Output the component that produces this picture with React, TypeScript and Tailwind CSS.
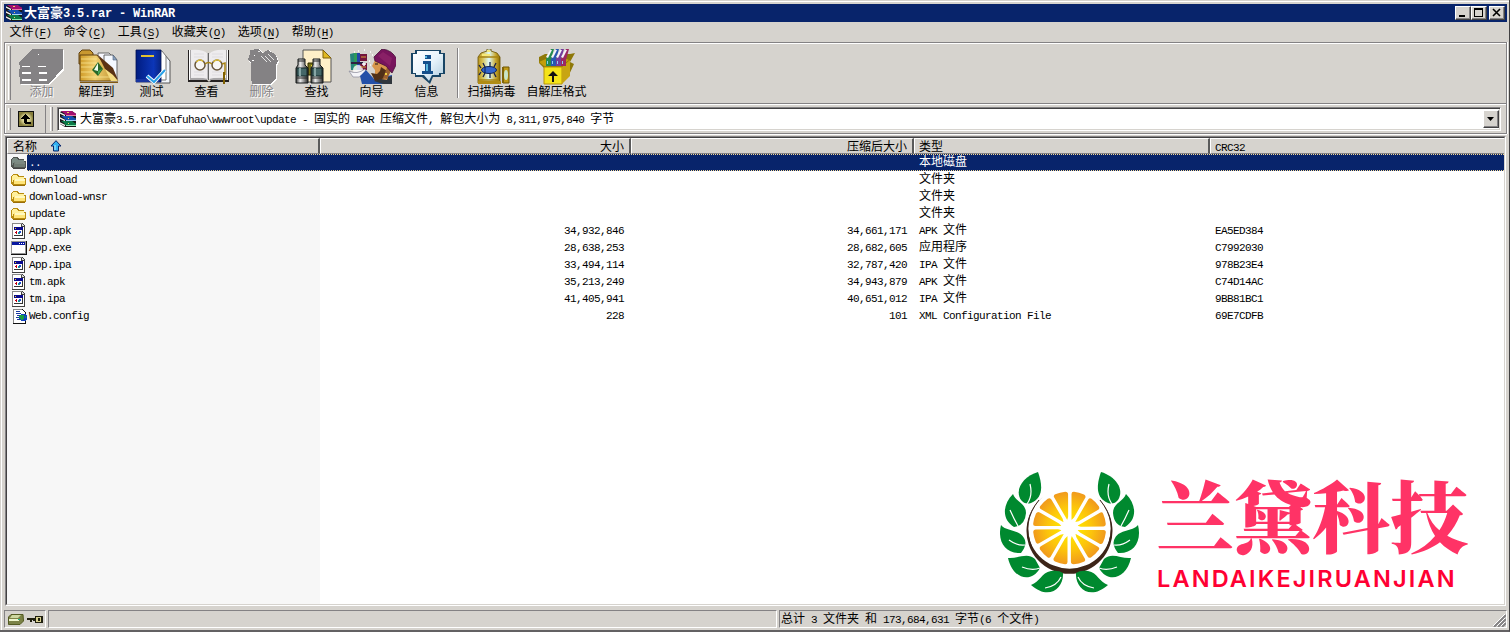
import React from "react";

/* Splits mixed text so Latin runs sit on a half-width grid next to full-width glyphs. */
function T({ children, bold = false }: { children: string; bold?: boolean }) {
  const runs = children.match(/[\u2e80-\uffff]+|[^\u2e80-\uffff]+/g) ?? [];
  return (
    <span className="whitespace-pre">
      {runs.map((r, i) =>
        /[\u2e80-\uffff]/.test(r) ? (
          <span key={i} className={bold ? "text-[13px] font-bold" : "text-[12px]"}>{r}</span>
        ) : (
          <span
            key={i}
            className={
              bold
                ? "font-['Liberation_Mono',monospace] text-[12px] font-bold tracking-[-0.2px]"
                : "font-['Liberation_Mono',monospace] text-[11px] tracking-[-0.6px]"
            }
          >
            {r}
          </span>
        )
      )}
    </span>
  );
}

function Books() {
  const books: [number, string, string][] = [
    [10, "#0a7a48", "#8ce8b4"],
    [5, "#1450b0", "#a0d0f8"],
    [0, "#a01070", "#e87aa8"],
  ];
  return (
    <svg width="16" height="16" viewBox="0 0 16 16" className="shrink-0">
      <path d="M0 1L2 0H12L16 3V16H5L0 13Z" fill="#181818" />
      {books.map(([y, cover, edge]) => (
        <g key={y} transform={`translate(0 ${y})`}>
          <path d="M1 0H12L16 3H5Z" fill={cover} />
          <path d="M5 2.500H16V4H5Z" fill={cover} />
          <path d="M6 4H16V5H6Z" fill={edge} />
          <path d="M0 1.200L5 3.800V5.200L0 2.800Z" fill="#f4f4f4" />
        </g>
      ))}
      <path d="M7 1H9V2H7ZM8 7H9V8H8ZM8 12H9V13H8Z" fill="#f0d060" />
    </svg>
  );
}

const icons: Record<string, React.ReactNode> = {
  add: (
    <g shapeRendering="crispEdges">
      <path d="M20 63L34 50H64V70L50 85H21V79L20 77V70Z" fill="#fff" />
      <path d="M19 62L33 49H63V68L49 84H20V78L19 76V70L20 68Z" fill="#848284" />
      <path d="M22 66H30V67H22ZM38 66H46V67H38ZM22 72H31V74H22ZM39 72H47V74H39ZM22 79H31V81H22ZM39 79H47V81H39Z" fill="#fff" />
      <path d="M38 54H39V55H38Z" fill="#fff" />
    </g>
  ),
  extract: (
    <g>
      <path d="M78 53L81 50H89L92 53V64H78Z" fill="#c89830" stroke="#604010" />
      <path d="M97 53H108L113 58V74H97Z" fill="#f8f8ff" stroke="#666" />
      <path d="M103 55H112L116 60V79H103Z" fill="#f4f8ff" stroke="#666" />
      <path d="M112 55V60H116Z" fill="#8aa4c0" stroke="#506078" strokeWidth=".6" />
      <path d="M79 55H96L117 81H79Z" fill="url(#gold)" stroke="#604010" />
      <path d="M80 59H96M80 63H98M80 67H94M80 72H92M80 77H110" stroke="#fff0a0" strokeWidth="1" opacity=".65" />
      <path d="M97 55L112 68L117 80L104 69Z" fill="#5a3214" />
      <path d="M104 69L112 75L117 81H110Z" fill="#f4dc80" />
      <path d="M97 62L91 70L97 76L102 69Z" fill="#286828" />
      <path d="M97 63L93 70L97 71Z" fill="#effff0" />
      <path d="M97 71L101 69L97 75Z" fill="#48a858" />
      <path d="M79 82H117V83H79Z" fill="#805810" />
    </g>
  ),
  test: (
    <g>
      <path d="M152 55H164L169 61V83H151Z" fill="#f2f6fc" stroke="#555" />
      <path d="M149 51H161L165 56V80H149Z" fill="#fff" stroke="#777" />
      <path d="M135 50H160V82H135Z" fill="url(#blue)" stroke="#001050" strokeWidth=".8" />
      <path d="M140 55H153V57H140Z" fill="#e0c030" />
      <path d="M135 79H158V82H135Z" fill="#1834a0" />
      <path d="M146 76L153 82L164 70" fill="none" stroke="#fff" strokeWidth="4" />
      <path d="M146 76L153 82L164 70" fill="none" stroke="#28a0e8" strokeWidth="2" />
    </g>
  ),
  view: (
    <g>
      <path d="M187 50H188V80H206L208 82L210 80H227V50H228V82H187Z" fill="#242020" />
      <path d="M188 50H189V80H188ZM226 50H227V80H226Z" fill="#fff" />
      <path d="M189 50H190V78H206V80H189ZM225 50H226V80H209V78H225Z" fill="#a8a6a8" />
      <path d="M190 50Q202 49 207 54V79Q200 77 190 78ZM208 54Q213 49 225 50V78Q214 77 208 79Z" fill="#eeecee" />
      <path d="M206 53H207V79H206Z" fill="#c0bec0" />
      <path d="M207.500 53V80" stroke="#666" />
      <path d="M193 54H203M193 57H203M193 72H203M193 75H203M211 57H222M211 54H222M211 72H221M211 75H221" stroke="#dedce0" />
      <circle cx="199" cy="65" r="5" fill="#f8f6f4" stroke="#68563c" strokeWidth="1.500" />
      <circle cx="216" cy="65" r="5" fill="#f8f6f4" stroke="#68563c" strokeWidth="1.500" />
      <path d="M204 64Q207.500 61 211 64M221 64L224 63V75" fill="none" stroke="#a88414" strokeWidth="1.500" />
      <path d="M195.500 62Q199 58 202 61.500M212.500 62Q216 58 219.500 61.500" fill="none" stroke="#e8c838" strokeWidth="1.300" />
      <path d="M222 72H224V84H222Z" fill="#806000" />
    </g>
  ),
  del: (
    <g shapeRendering="crispEdges">
      <path d="M248 61L250 55V50L258 49L263 53L268 50L276 56L278 62L276 66V79L271 85H252L251 78L250 64Z" fill="#fff" />
      <path d="M247 60L249 54V50L257 49L262 53L267 50L275 55L277 61L275 65V78L270 84H251L250 77V63Z" fill="#848284" />
      <path d="M257 52L259 51M264 56L270 62M267 54L273 60M260 56L266 62" stroke="#fff" fill="none" strokeWidth=".8" />
      <path d="M253 55H254V56H253ZM251 60H253V61H251Z" fill="#fff" />
    </g>
  ),
  find: (
    <g>
      <path d="M302 50H322L330 58V82H302Z" fill="#fff0c8" stroke="#555" />
      <path d="M322 50V58H330Z" fill="#e0b820" stroke="#806008" />
      <path d="M307 63H316V75H307Z" fill="#777018" stroke="#302c00" />
      <path d="M310 65H314V71H310Z" fill="#e8d838" />
      {[294, 309].map((x) => (
        <g key={x} fill="none">
          <path d={`M${x + 3} 59H${x + 10}V65L${x + 13} 68V83H${x + 1}V68L${x + 3} 65Z`} fill="url(#metal)" stroke="#151818" />
          <path d={`M${x + 2} 68H${x + 12}V76H${x + 2}Z`} fill="#456768" stroke="#122626" />
          <path d={`M${x + 5} 68V76`} stroke="#88a6a5" strokeWidth="2" />
          <path d={`M${x + 3} 61H${x + 10}M${x + 2} 78H${x + 12}`} stroke="#222" />
        </g>
      ))}
    </g>
  ),
  wizard: (
    <g>
      <path d="M349 54L353 53V70H350Z" fill="#24857b" />
      <path d="M353 53H356V70H353Z" fill="#2f9a58" />
      <path d="M356 53H359V70H356Z" fill="#2344a8" />
      <path d="M359 54H366V61H359ZM359 63H366V70H359Z" fill="#74143c" />
      <path d="M350 62H364V64H350Z" fill="#2c2040" />
      <circle cx="357" cy="70" r="5" fill="#fff" opacity=".8" />
      <path d="M360 57H365M360 67H365" stroke="#d8a038" />
      <path d="M348 71Q356 75 364 69L365 73L358 77H352Z" fill="#f4f4f8" stroke="#88889a" strokeWidth=".7" />
      <path d="M359 76L365 70L373 79L391 75V84H361Z" fill="#2450a8" />
      <path d="M373 81L382 84H391V76Z" fill="#30363c" />
      <path d="M374 60L371 66L374 70V78L386 80L389 70L385 60Z" fill="#d8964c" />
      <path d="M380 67L386 71L384 78L374 81L370 73L376 74L379 71Z" fill="#503018" />
      <path d="M387 65L390 71L386 79L382 78Z" fill="#9a6030" />
      <path d="M373 57L381 49Q392 50 396 60V63L391 73L385 66L374 61Z" fill="#78145c" stroke="#451038" strokeWidth=".8" />
      <path d="M377 56L382 52L391 58L389 66Z" fill="#94286c" opacity=".6" />
      <path d="M374 64H377" stroke="#1b1410" />
      <path d="M384 73H386V75H384Z" fill="#f0cf3b" />
      <path d="M357 51H358M363 50H364M369 52H370M371 55H372M353 52H354M368 61H369M369 65H370M363 62V66M361 64H365" stroke="#fff" strokeWidth="1.500" />
    </g>
  ),
  info: (
    <g>
      <path d="M414 50H440V53H444V74H440V77H432L429 84L421 77H414V74H410V53H414Z" fill="#184565" />
      <path d="M416 51H438V54H442V73H438V75H431L428 81L423 75H415V73H412V54H416Z" fill="url(#bubble)" />
      <path d="M424 55H430V59H424ZM422 61H430V71H432V74H421V71H424V64H422Z" fill="#134f8b" />
      <path d="M424 56H426V58H424ZM425 64H427V71H425Z" fill="#58b6dc" />
    </g>
  ),
  scan: (
    <g>
      <path d="M486 49H490V51L496 53L499 57V83H477V57L480 53L486 51Z" fill="url(#bottle)" stroke="#6a5200" strokeWidth=".8" />
      <path d="M478 57H498M478 80H498" stroke="#a88410" strokeWidth="1.500" />
      <path d="M486 50H489V52H486ZM481 54H489V56H481Z" fill="#f6e979" />
      <path d="M477 81H500V84H477Z" fill="#b08c14" />
      <path d="M480 68L478 65M480 72L478 75M484 67L482 63M484 73L482 77M489 67V62M489 73V78M493 67L495 63M493 73L495 77" stroke="#15204d" strokeWidth="1.300" fill="none" />
      <ellipse cx="488" cy="70" rx="7.500" ry="3.500" fill="#3264cc" stroke="#102354" />
      <path d="M484 67V73" stroke="#0b2251" />
      <path d="M502 67H508V83H502Z" fill="#c09a18" stroke="#705600" />
      <path d="M501 67H503V83H501Z" fill="#806408" />
      <ellipse cx="505" cy="75" rx="2" ry="5" fill="#c8e4c8" />
    </g>
  ),
  sfx: (
    <g>
      <path d="M539 57L545 54L570 54L575 53L570 62L574 64L568 77L560 84H544V68L539 63Z" fill="#8e7808" />
      <path d="M544 67H562V84H544Z" fill="#f4e31a" stroke="#b6930a" />
      <path d="M562 67L570 60V76L562 84Z" fill="#c8a512" />
      <path d="M539 62L544 66H561L569 60L564 58H548Z" fill="#c39e0a" />
      {[
        [546, "#248b50"],
        [551, "#2858b0"],
        [556, "#753c9c"],
        [561, "#9c2862"],
      ].map(([x, c]) => (
        <g key={x}>
          <path d={`M${x} 59L${+x + 5} 49H${+x + 8}L${+x + 5} 60V66H${x}Z`} fill={c as string} />
          <path d={`M${+x} 57L${+x + 4} 50H${+x + 6}L${+x + 2} 58Z`} fill="#f5f4fb" />
          <path d={`M${+x + 1} 61H${+x + 2}V64H${+x + 1}Z`} fill="#8ad1ee" />
        </g>
      ))}
      <path d="M553 71L548 76H552V82H554V76H558Z" fill="#111" />
    </g>
  ),
};

const tools = [
  { id: "add", x: 18, label: "添加", off: true, w: "w-[55px]" },
  { id: "extract", x: 72, label: "解压到", w: "w-[55px]" },
  { id: "test", x: 127, label: "测试", w: "w-[55px]" },
  { id: "view", x: 182, label: "查看", w: "w-[55px]" },
  { id: "del", x: 237, label: "删除", off: true, w: "w-[55px]" },
  { id: "find", x: 292, label: "查找", w: "w-[55px]" },
  { id: "wizard", x: 347, label: "向导", w: "w-[55px]" },
  { id: "info", x: 402, label: "信息", w: "w-[55px]" },
  { id: "scan", x: 467, label: "扫描病毒", w: "w-[59px]" },
  { id: "sfx", x: 533, label: "自解压格式", w: "w-[71px]" },
];

function Tool({ t }: { t: (typeof tools)[number] }) {
  return (
    <div className={`flex shrink-0 flex-col items-center pt-[6px] ${t.w}`}>
      <svg width="48" height="36" viewBox={`${t.x} 49 48 36`} className="shrink-0">
        {icons[t.id]}
      </svg>
      <div className={`h-[14px] leading-[11px] ${t.off ? "text-[#848284] [text-shadow:1px_1px_#fff]" : ""}`}>
        <T>{t.label}</T>
      </div>
    </div>
  );
}

function Defs() {
  return (
    <svg width="0" height="0" className="absolute">
      <defs>
        <linearGradient id="gold"><stop stopColor="#d09c28" /><stop offset=".4" stopColor="#f0cf70" /><stop offset="1" stopColor="#b58724" /></linearGradient>
        <radialGradient id="khaki"><stop stopColor="#f0ecb8" /><stop offset=".6" stopColor="#cdc688" /><stop offset="1" stopColor="#867e3c" /></radialGradient>
        <linearGradient id="blue"><stop stopColor="#001c80" /><stop offset=".7" stopColor="#0c36b8" /><stop offset="1" stopColor="#082480" /></linearGradient>
        <linearGradient id="metal"><stop stopColor="#333" /><stop offset=".35" stopColor="#eee" /><stop offset="1" stopColor="#282828" /></linearGradient>
        <linearGradient id="bubble" x2="1" y2="1"><stop stopColor="#fff" /><stop offset=".5" stopColor="#e8f4fb" /><stop offset="1" stopColor="#aecbdd" /></linearGradient>
        <linearGradient id="bottle"><stop stopColor="#b89420" /><stop offset=".22" stopColor="#d8c458" /><stop offset=".5" stopColor="#dcfaff" /><stop offset=".8" stopColor="#c8a830" /><stop offset="1" stopColor="#8c6c00" /></linearGradient>
        <radialGradient id="citrus" gradientUnits="userSpaceOnUse" cx="1069.5" cy="528" r="37"><stop offset=".2" stopColor="#ffe600" /><stop offset=".6" stopColor="#fcc40c" /><stop offset="1" stopColor="#f0981e" /></radialGradient>
      </defs>
    </svg>
  );
}

function FolderIcon({ dim = false }: { dim?: boolean }) {
  return (
    <svg width="16" height="14" viewBox="0 0 16 14" shapeRendering="crispEdges">
      <path d="M0 3L1 2L2 1H6L8 3H13V5H15V12L13 13H2L0 11Z" fill={dim ? "#505450" : "#b88c10"} />
      <path d="M1 3L2 2H6L7 4H13V6H3L1 10Z" fill={dim ? "#7c8c84" : "#fff09c"} />
      <path d="M3 6H14V11H3Z" fill={dim ? "#707c74" : "#ffe478"} />
      <path d="M4 6H14V8H4Z" fill={dim ? "#7c8880" : "#fff8c0"} />
      <path d="M2 12H14V13H2Z" fill={dim ? "#444" : "#986c08"} />
    </svg>
  );
}

function DocIcon() {
  return (
    <svg width="15" height="16" viewBox="0 0 15 16" shapeRendering="crispEdges">
      <path d="M1 0H11L14 3V16H1Z" fill="#404040" />
      <path d="M1 0H11V1H2V15H1Z" fill="#888" />
      <path d="M2 1H10V4H13V15H2Z" fill="#fff" />
      <path d="M11 1L13 3H11Z" fill="#ddd" />
      <path d="M3 4H12V13H3Z" fill="#333" />
      <path d="M3 7H11V12H3Z" fill="#fff" />
      <path d="M3 4H12V7H3Z" fill="#08088c" />
      <path d="M4 5H5V6H4Z" fill="#ffd800" />
      <path d="M4 9H5V10H4ZM5 8H6V11H5Z" fill="#c00010" />
      <path d="M7 9H9V11H7Z" fill="#109898" />
      <path d="M8 8H10V10H8Z" fill="#2050d0" />
    </svg>
  );
}

function ExeIcon() {
  return (
    <svg width="16" height="14" viewBox="0 0 16 14" shapeRendering="crispEdges">
      <path d="M0 0H16V14H0Z" fill="#111" />
      <path d="M0 0H15V13H0Z" fill="#949494" />
      <path d="M1 1H14V12H1Z" fill="#fff" />
      <path d="M1 1H14V4H1Z" fill="#0818a0" />
      <path d="M8 2H9V3H8ZM10 2H11V3H10ZM12 2H13V3H12Z" fill="#fff" />
    </svg>
  );
}

function XmlIcon() {
  return (
    <svg width="16" height="16" viewBox="0 0 16 16" shapeRendering="crispEdges">
      <path d="M2 1H11L14 4V15H2Z" fill="#fff" />
      <path d="M2 15V1H11" fill="none" stroke="#888" />
      <path d="M11 1L14 4V15H2" fill="none" stroke="#111" />
      <path d="M5 3H9V4H5ZM5 5H10V6H5ZM6 7H10V8H6ZM5 9H8V10H5ZM6 11H9V12H6Z" fill="#1838a0" />
      <path d="M10 6H14L16 8V11L14 13H10L8 11V8Z" fill="#1040c0" />
      <path d="M10 7H13V11L11 12L8 10V8ZM14 8H15V10H14Z" fill="#18a040" />
    </svg>
  );
}

const rows: { name: string; icon: string; size?: string; packed?: string; type: string; crc?: string }[] = [
  { name: "..", icon: "up", type: "本地磁盘" },
  { name: "download", icon: "folder", type: "文件夹" },
  { name: "download-wnsr", icon: "folder", type: "文件夹" },
  { name: "update", icon: "folder", type: "文件夹" },
  { name: "App.apk", icon: "doc", size: "34,932,846", packed: "34,661,171", type: "APK 文件", crc: "EA5ED384" },
  { name: "App.exe", icon: "exe", size: "28,638,253", packed: "28,682,605", type: "应用程序", crc: "C7992030" },
  { name: "App.ipa", icon: "doc", size: "33,494,114", packed: "32,787,420", type: "IPA 文件", crc: "978B23E4" },
  { name: "tm.apk", icon: "doc", size: "35,213,249", packed: "34,943,879", type: "APK 文件", crc: "C74D14AC" },
  { name: "tm.ipa", icon: "doc", size: "41,405,941", packed: "40,651,012", type: "IPA 文件", crc: "9BB81BC1" },
  { name: "Web.config", icon: "xml", size: "228", packed: "101", type: "XML Configuration File", crc: "69E7CDFB" },
];

function RowIcon({ k }: { k: string }) {
  if (k === "up") return <FolderIcon dim />;
  if (k === "folder") return <FolderIcon />;
  if (k === "exe") return <ExeIcon />;
  if (k === "xml") return <XmlIcon />;
  return <DocIcon />;
}

const dots = "h-px bg-[repeating-linear-gradient(90deg,#f7db94_0px,#f7db94_1px,#08246b_1px,#08246b_2px)]";

function FileRow({ r }: { r: (typeof rows)[number] }) {
  const sel = r.icon === "up";
  return (
    <div className={`relative flex h-[17px] shrink-0 leading-[14px] ${sel ? "bg-[#08246b] text-white" : ""}`}>
      {sel && (
        <div className="absolute inset-y-0 left-[20px] right-0 flex flex-col justify-between">
          <div className={dots} />
          <div className={dots} />
        </div>
      )}
      <div className={`flex w-[313px] ${sel ? "" : "bg-[#f7f7f7]"}`}>
        <div className={`flex w-[20px] items-center pl-1 ${sel ? "bg-[#f7f7f7]" : ""}`}>
          <RowIcon k={r.icon} />
        </div>
        <div className="pl-[2px]"><T>{r.name}</T></div>
      </div>
      <div className="w-[311px] pr-[7px] text-right"><T>{r.size ?? ""}</T></div>
      <div className="w-[283px] pr-[7px] text-right"><T>{r.packed ?? ""}</T></div>
      <div className="w-[296px] pl-[5px]"><T>{r.type}</T></div>
      <div className="pl-[5px]"><T>{r.crc ?? ""}</T></div>
    </div>
  );
}

const headCell = "h-[16px] border-t border-l border-white border-b border-b-[#848284] leading-[13px]";

function HeaderRow() {
  const div = "border-r-2 border-r-[#5a5a5a]";
  return (
    <div className="flex h-[16px] shrink-0 bg-[#d6d3ce]">
      <div className={`${headCell} ${div} flex w-[313px] pl-[5px]`}>
        <T>名称</T>
        <svg width="12" height="12" viewBox="0 0 12 12" className="ml-[13px] mt-px">
          <path d="M6 .7L11 6H8.500V11H3.500V6H1Z" fill="#30b0f0" stroke="#08246b" />
          <path d="M5 5V10" stroke="#b8f0ff" />
        </svg>
      </div>
      <div className={`${headCell} ${div} w-[311px] pr-[5px] text-right`}><T>大小</T></div>
      <div className={`${headCell} ${div} w-[283px] pr-[5px] text-right`}><T>压缩后大小</T></div>
      <div className={`${headCell} ${div} w-[296px] pl-[4px]`}><T>类型</T></div>
      <div className={`${headCell} flex-1 pl-[4px] leading-[11px]`}><T>CRC32</T></div>
    </div>
  );
}

function Leaves() {
  return (
    <g>
      <g fill="#00892f">
        <path d="M1038 472C1024 476 1014 489 1021 500Q1025 505 1031 503C1043 498 1043 486 1038 472Z" />
        <path d="M1013 494C1016 502 1026 503 1026 513Q1025 526 1014 527C1002 520 1002 505 1013 494Z" />
        <path d="M1001 525C1007 532 1019 529 1024 538Q1028 544 1021 553C1005 554 997 541 1001 525Z" />
        <path d="M1008 558C1018 559 1027 552 1035 559L1040 568C1032 583 1013 580 1008 558Z" />
        <path d="M1031 585C1040 582 1041 573 1051 571Q1059 570 1063 573C1064 588 1049 601 1031 585Z" />
      </g>
      <g stroke="#fff" strokeWidth="1.200" fill="none">
        <path d="M1030 484Q1033 496 1027 504M1010 510Q1014 519 1018 526M1009 540Q1017 546 1025 545M1022 567Q1032 571 1040 568M1045 588Q1057 586 1061 577" />
      </g>
    </g>
  );
}

function Watermark() {
  const slices = Array.from({ length: 12 }, (_, i) => i * 30);
  return (
    <div className="absolute left-[1000px] top-[466px] flex">
      <svg width="140" height="130" viewBox="1000 466 140 130">
        <path fillRule="evenodd" d="M1043 497A43 43 0 1 0 1096 497A41.500 40.500 0 1 1 1043 497Z" fill="#3c2418" />
        <path d="M1039 500Q1021 522 1032 548M1100 500Q1118 522 1107 548" fill="none" stroke="#3c2418" strokeWidth="1" />
        {slices.map((a) => (
          <g key={a} transform={`rotate(${a} 1069.500 528)`}>
            <path d="M1071.500 520V494Q1071.500 491.500 1074 491.700Q1079 492.300 1084 494.500Q1086.500 496 1085 498.300L1074 517.500Z" fill="url(#citrus)" />
          </g>
        ))}
        <circle cx="1069.500" cy="528" r="8.500" fill="#fff" />
        <Leaves />
        <g transform="translate(2139 0) scale(-1 1)"><Leaves /></g>
      </svg>
      <div className="flex flex-col pl-[16px]">
        <div className="h-[98px] whitespace-nowrap font-['Noto_Serif_CJK_SC','Noto_Sans_CJK_SC',serif] text-[78px] font-black leading-[94px] text-[#ff3366]">兰黛科技</div>
        <div className="h-[30px] whitespace-nowrap pl-px font-['Inter',sans-serif] text-[23.5px] font-semibold leading-[29px] tracking-[2.150px] text-[#ff0033]">LANDAIKEJIRUANJIAN</div>
      </div>
    </div>
  );
}

const winBtn = "flex h-[14px] w-[16px] items-center justify-center border border-white border-b-[#424142] border-r-[#424142] bg-[#d6d3ce] shadow-[inset_-1px_-1px_#848284]";

export default function App() {
  const menus: [string, string][] = [["文件", "F"], ["命令", "C"], ["工具", "S"], ["收藏夹", "O"], ["选项", "N"], ["帮助", "H"]];
  const grip = "w-[3px] shrink-0 border-l border-l-white border-r border-r-[#848284]";
  return (
    <div className="relative flex h-[632px] w-[1510px] flex-col overflow-hidden border-b-2 border-r border-b-[#636163] border-r-[#424142] bg-[#d6d3ce] font-['Noto_Sans_CJK_SC',sans-serif] text-[12px] text-black shadow-[inset_1px_1px_#d6d3ce,inset_2px_2px_#fff]">
      <Defs />
      <div className="mx-[4px] mr-[2px] mt-[4px] flex h-[18px] shrink-0 items-center bg-[#08246b] pl-[2px] pr-[2px] text-white">
        <Books />
        <div className="flex-1 pl-[2px] leading-[18px]"><T bold>大富豪3.5.rar - WinRAR</T></div>
        <div className={winBtn}>
          <svg width="12" height="10" viewBox="0 0 12 10"><path d="M2 7H8V9H2Z" fill="#000" /></svg>
        </div>
        <div className={winBtn}>
          <svg width="12" height="10" viewBox="0 0 12 10"><path fillRule="evenodd" d="M1 0H10V9H1ZM2 2V8H9V2Z" fill="#000" /></svg>
        </div>
        <div className={`${winBtn} ml-[2px]`}>
          <svg width="12" height="10" viewBox="0 0 12 10"><path d="M2 1L9 8M9 1L2 8" stroke="#000" strokeWidth="1.600" /></svg>
        </div>
      </div>

      <div className="flex h-[20px] shrink-0 gap-[12px] pl-[9.5px] leading-[17px]">
        {menus.map(([n, k]) => (
          <div key={k} className="flex">
            <T>{n + "("}</T>
            <span className="underline underline-offset-2"><T>{k}</T></span>
            <T>)</T>
          </div>
        ))}
      </div>

      <div className="ml-[4px] mr-[2px] flex h-[92px] shrink-0 flex-col border border-[#848284] border-b-[#848284] shadow-[inset_1px_1px_#fff,0_1px_#fff,1px_0_#fff]">
        <div className="flex h-[61px] shrink-0 border-b border-b-[#848284]">
          <div className={`${grip} ml-[3px] mr-[3px] my-[3px]`} />
          {tools.slice(0, 8).map((t) => <Tool key={t.id} t={t} />)}
          <div className="mx-[3px] my-[5px] w-[2px] border-l border-l-[#848284] border-r border-r-white" />
          {tools.slice(8).map((t) => <Tool key={t.id} t={t} />)}
        </div>
        <div className="flex flex-1 border-t border-t-white">
          <div className={`${grip} my-[3px] ml-[3px]`} />
          <div className="flex w-[35px] shrink-0 items-center justify-center border-r border-r-[#848284] pr-[4px]">
            <svg width="16" height="16" viewBox="0 0 16 16" shapeRendering="crispEdges">
              <path d="M0 0H16V16H0Z" fill="#101010" />
              <path d="M1 1H15V15H1Z" fill="url(#khaki)" />
              <path d="M7 3L8 3L12 8H9V11H13V13H7V12H6V8H3Z" fill="#000" />
            </svg>
          </div>
          <div className={`${grip} my-[2px] ml-[4px]`} />
          <div className="my-[2px] ml-[4px] mr-[5px] flex flex-1 items-center border border-[#848284] border-b-white border-r-white bg-white pl-[2px] shadow-[inset_1px_1px_#424142,inset_-1px_-1px_#d6d3ce]">
            <Books />
            <div className="flex-1 pl-[4px] leading-[17px]">
              <T>{"大富豪3.5.rar\\Dafuhao\\wwwroot\\update - 固实的 RAR 压缩文件, 解包大小为 8,311,975,840 字节"}</T>
            </div>
            <div className="mr-[1px] flex h-[18px] w-[16px] items-center justify-center border border-white border-b-[#424142] border-r-[#424142] bg-[#d6d3ce] shadow-[inset_-1px_-1px_#848284]">
              <svg width="8" height="4" viewBox="0 0 8 4"><path d="M0 0H7L3.500 4Z" fill="#000" /></svg>
            </div>
          </div>
        </div>
      </div>

      <div className="ml-[5px] mr-[3px] mt-[2px] flex h-[470px] shrink-0 flex-col border border-[#848284] border-b-white border-r-white">
        <div className="flex flex-1 flex-col border border-[#424142] border-b-[#d6d3ce] border-r-[#d6d3ce] bg-white">
          <HeaderRow />
          {rows.map((r) => <FileRow key={r.name} r={r} />)}
          <div className="w-[313px] flex-1 bg-[#f7f7f7]" />
        </div>
      </div>

      <div className="ml-[4px] mr-[2px] mt-[4px] flex h-[18px] shrink-0 gap-[2px]">
        <div className="flex w-[42px] items-center justify-center gap-[3px] border border-[#848284] border-b-white border-r-white">
          <svg width="16" height="11" viewBox="0 0 16 11">
            <path d="M3 .5H15L15.500 7L12 10.500H.5V3Z" fill="#7b8246" stroke="#535a22" />
            <path d="M4 1H13L10 4H2Z" fill="#cdd7a0" />
            <path d="M1 5H11V7H1Z" fill="#eef5ce" />
            <path d="M10 5H12V6H10Z" fill="#20b080" />
          </svg>
          <svg width="16" height="9" viewBox="0 0 16 9" shapeRendering="crispEdges">
            <path d="M0 3H8V6H6V5H5V7H3V5H0ZM8 1H16V8H8Z" fill="#202010" />
            <path d="M9 2H14V7H9Z" fill="#d7d090" />
            <path d="M11 3H13V6H11Z" fill="#202010" />
          </svg>
        </div>
        <div className="w-[729px] border border-[#848284] border-b-white border-r-white" />
        <div className="flex flex-1 items-center justify-between border border-[#848284] border-b-white border-r-white pl-px">
          <T>总计 3 文件夹 和 173,684,631 字节(6 个文件)</T>
          <svg width="13" height="13" viewBox="0 0 13 13" className="self-end">
            <path d="M1 13L13 1M5 13L13 5M9 13L13 9" stroke="#848284" strokeWidth="2" />
            <path d="M0 12L12 0M4 12L12 4M8 12L12 8" stroke="#fff" />
          </svg>
        </div>
      </div>
      <Watermark />
    </div>
  );
}
